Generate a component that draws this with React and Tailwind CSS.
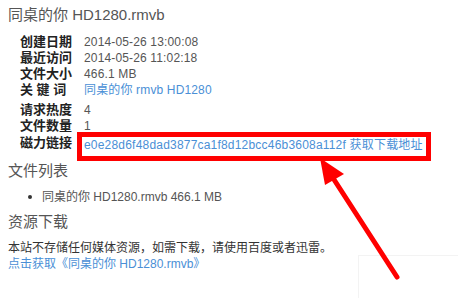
import React from 'react';

const info = [
  { label: '创建日期', value: '2014-05-26 13:00:08' },
  { label: '最近访问', value: '2014-05-26 11:02:18' },
  { label: '文件大小', value: '466.1 MB' },
];

const Row = ({ label, children, className = '' }) => (
  <div className={`flex items-start leading-4 ${className}`}>
    <div className="w-16 shrink-0 text-[13px] font-bold text-[#222]">{label}</div>
    <div className="tracking-[0.15px] text-[#555]">{children}</div>
  </div>
);

const App = () => {
  return (
    <div
      className="relative w-[458px] h-[298px] overflow-hidden bg-white pl-2 text-[12px]"
      style={{ fontFamily: '"Liberation Sans", "Noto Sans CJK SC", sans-serif' }}
    >
      <h1 className="pt-[5px] text-[15px] leading-5 text-[#555]">同桌的你 HD1280.rmvb</h1>

      <div className="mt-[9px] pl-3">
        {info.map((r) => (
          <Row key={r.label} label={r.label}>{r.value}</Row>
        ))}
        <Row label="关 键 词" className="h-5">
          <a className="text-[#4a8fd6]">同桌的你 rmvb HD1280</a>
        </Row>
        <Row label="请求热度">4</Row>
        <Row label="文件数量">1</Row>
        <div className="flex items-start leading-4">
          <div className="w-16 shrink-0 pt-[1px] text-[13px] font-bold text-[#222]">磁力链接</div>
          <div className="-ml-[7px] -mt-[2px] w-[354px] border-[5px] border-[#ff0000] pl-[2px] pb-[3px] leading-4 tracking-[0.2px] text-[#4a8fd6]">
            e0e28d6f48dad3877ca1f8d12bcc46b3608a112f 获取下载地址
          </div>
        </div>
      </div>

      <h2 className="mt-0 text-[15px] leading-5 text-[#555]">文件列表</h2>
      <ul className="mt-[8px] pl-[20px] leading-4 text-[#555]">
        <li className="flex items-center gap-[10px]">
          <span className="h-[4px] w-[4px] rounded-full bg-[#333]"></span>
          <span>同桌的你 HD1280.rmvb 466.1 MB</span>
        </li>
      </ul>

      <h2 className="mt-[7px] text-[15px] leading-5 text-[#555]">资源下载</h2>
      <p className="mt-[8px] leading-4 text-[#333]">本站不存储任何媒体资源，如需下载，请使用百度或者迅雷。</p>
      <a className="block leading-4 text-[#4a8fd6]">点击获取《同桌的你 HD1280.rmvb》</a>

      <div className="absolute left-[358px] top-[255px] h-[50px] w-[104px] border border-[#f3f3f3]"></div>

      <svg className="absolute left-0 top-0" width="458" height="298" viewBox="0 0 458 298">
        <line x1="397" y1="277" x2="333" y2="178" stroke="#ff0000" strokeWidth="5" strokeLinecap="round" />
        <polygon points="320,158 325,185 344,174" fill="#ff0000" />
      </svg>
    </div>
  );
};

export default App;
